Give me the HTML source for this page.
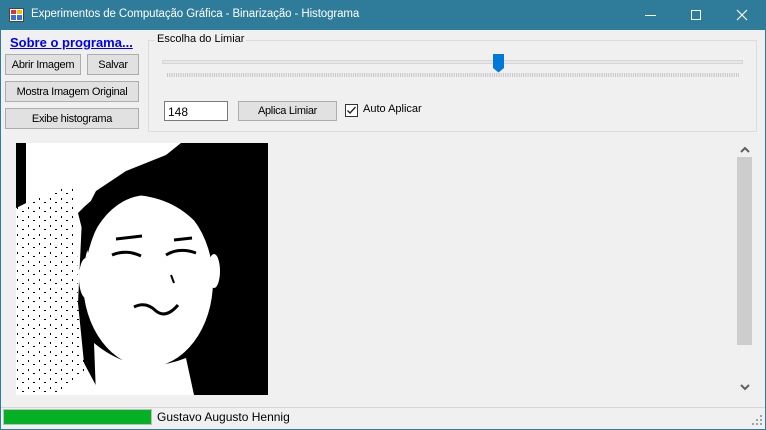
<!DOCTYPE html>
<html><head><meta charset="utf-8"><style>
*{margin:0;padding:0;box-sizing:border-box}
body{width:766px;height:430px;overflow:hidden;background:#f0f0f0;font-family:"Liberation Sans",sans-serif;font-size:12px;color:#000;position:relative}
.a{position:absolute}
.win{left:0;top:0;width:766px;height:430px;border:1px solid #2e7b9a;border-top:none}
.title{left:0;top:0;width:766px;height:30px;background:#2e7b9a;color:#fff;font-size:12px}
.btn{position:absolute;background:#e1e1e1;border:1px solid #adadad;text-align:center;font-size:11px;line-height:20px;letter-spacing:-0.3px}
</style></head><body>
<div class="a win"></div>
<div class="a title">
 <svg class="a" style="left:9px;top:8px" width="15" height="14"><rect x="0.5" y="0.5" width="14" height="13" fill="#fff" stroke="#444"/><rect x="2" y="2" width="5" height="4" fill="#d33"/><rect x="8" y="2" width="5" height="4" fill="#f4c000"/><rect x="2" y="7" width="5" height="5" fill="#3a6fd8"/><rect x="8" y="7" width="5" height="5" fill="#3a6fd8"/></svg>
 <div class="a" style="left:31px;top:8px;font-size:11.5px;letter-spacing:-0.1px">Experimentos de Computação Gráfica - Binarização - Histograma</div>
 <div class="a" style="left:645px;top:15px;width:11px;height:1px;background:#fff"></div>
 <div class="a" style="left:691px;top:10px;width:10px;height:10px;border:1px solid #fff"></div>
 <svg class="a" style="left:736px;top:9px" width="12" height="12"><path d="M1 1L11 11M11 1L1 11" stroke="#fff" stroke-width="1.2"/></svg>
</div>
<div class="a" style="left:10px;top:35px;color:#0000ee;font-weight:bold;text-decoration:underline;font-size:13px">Sobre o programa...</div>
<div class="btn" style="left:5px;top:54px;width:76px;height:21px">Abrir Imagem</div>
<div class="btn" style="left:87px;top:54px;width:52px;height:21px">Salvar</div>
<div class="btn" style="left:5px;top:81px;width:134px;height:21px">Mostra Imagem Original</div>
<div class="btn" style="left:5px;top:108px;width:134px;height:21px">Exibe histograma</div>
<div class="a" style="left:148px;top:40px;width:609px;height:92px;border:1px solid #dcdcdc"></div>
<div class="a" style="left:155px;top:33px;background:#f0f0f0;padding:0 2px;font-size:11px">Escolha do Limiar</div>
<div class="a" style="left:162px;top:60px;width:581px;height:4px;background:#e7e7e7;border:1px solid #d6d6d6"></div>
<svg class="a" style="left:167px;top:73px" width="572" height="4"><defs><pattern id="t" width="2.24" height="4" patternUnits="userSpaceOnUse"><rect width="1" height="4" fill="#c4c4c4"/></pattern></defs><rect width="572" height="4" fill="url(#t)"/></svg>
<svg class="a" style="left:493px;top:54px" width="12" height="19"><path d="M0 0H11V14L5.5 18.5L0 14Z" fill="#0078d7"/></svg>
<div class="a" style="left:164px;top:101px;width:64px;height:20px;background:#fff;border:1px solid #7a7a7a;padding:3px 0 0 3px">148</div>
<div class="btn" style="left:238px;top:101px;width:99px;height:20px;line-height:19px">Aplica Limiar</div>
<svg class="a" style="left:345px;top:104px" width="13" height="13"><rect x="0.5" y="0.5" width="12" height="12" fill="#fff" stroke="#333"/><path d="M2.5 6.5L5 9L10.5 3" stroke="#222" stroke-width="1.3" fill="none"/></svg>
<div class="a" style="left:363px;top:103px;font-size:11px">Auto Aplicar</div>
<svg class="a" style="left:16px;top:143px" width="252" height="252">
 <defs><pattern id="n" width="11" height="9" patternUnits="userSpaceOnUse"><rect x="1" y="1" width="1" height="2" fill="#000"/><rect x="6" y="5" width="2" height="1" fill="#000"/></pattern></defs>
 <rect width="252" height="252" fill="#000"/>
 <path d="M10 0H165L150 12L110 28L80 48L66 75L62 160L68 220L85 252H0V65L10 60Z" fill="#fff"/>
 <path d="M0 0H10V60L0 65Z" fill="#000"/>
 <path d="M10 60L60 40L62 160L70 230L40 252H0V65Z" fill="url(#n)"/>
 <ellipse cx="132" cy="138" rx="65" ry="86" fill="#fff"/>
 <path d="M62 70Q110 20 170 40Q200 60 198 110L185 85Q160 55 120 52Q85 58 72 110Z" fill="#000"/>
 <ellipse cx="70" cy="135" rx="7" ry="20" fill="#fff"/>
 <ellipse cx="198" cy="128" rx="6" ry="17" fill="#fff"/>
 <path d="M78 200Q120 235 170 215L178 252H80Z" fill="#fff"/>
 <path d="M96 112Q110 106 125 113" stroke="#000" stroke-width="3" fill="none"/>
 <path d="M150 112Q163 104 180 110" stroke="#000" stroke-width="3" fill="none"/>
 <path d="M100 96L126 93M158 97L176 95" stroke="#000" stroke-width="3"/>
 <path d="M118 164Q130 158 140 168Q150 176 162 162" stroke="#000" stroke-width="3" fill="none"/>
 <path d="M155 132L158 140" stroke="#000" stroke-width="2"/>
</svg>
<div class="a" style="left:736px;top:140px;width:17px;height:256px;background:#f0f0f0"></div>
<svg class="a" style="left:740px;top:146px" width="10" height="8"><path d="M1 6L5 2L9 6" stroke="#606060" stroke-width="2" fill="none"/></svg>
<div class="a" style="left:737px;top:157px;width:15px;height:188px;background:#cdcdcd"></div>
<svg class="a" style="left:740px;top:383px" width="10" height="8"><path d="M1 2L5 6L9 2" stroke="#606060" stroke-width="2" fill="none"/></svg>
<div class="a" style="left:1px;top:407px;width:764px;height:1px;background:#d7d7d7"></div>
<div class="a" style="left:3px;top:409px;width:149px;height:16px;border:1px solid #bcbcbc;background:#e6e6e6"></div>
<div class="a" style="left:4px;top:410px;width:147px;height:14px;background:#06b025"></div>
<div class="a" style="left:157px;top:410px;font-size:12px">Gustavo Augusto Hennig</div>
<svg class="a" style="left:752px;top:415px" width="11" height="11" fill="#a0a0a0"><rect x="8" y="0" width="2" height="2"/><rect x="4" y="4" width="2" height="2"/><rect x="8" y="4" width="2" height="2"/><rect x="0" y="8" width="2" height="2"/><rect x="4" y="8" width="2" height="2"/><rect x="8" y="8" width="2" height="2"/></svg>
</body></html>
